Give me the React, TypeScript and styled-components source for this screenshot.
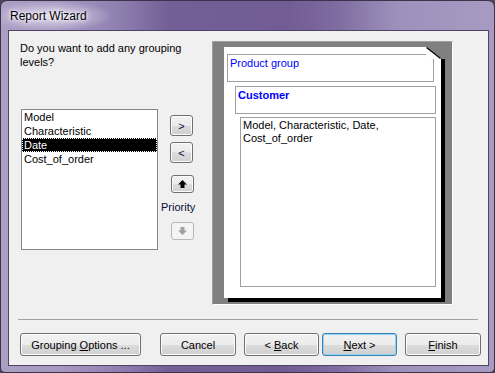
import styled, { createGlobalStyle } from "styled-components";

const GlobalStyle = createGlobalStyle`
  html, body {
    margin: 0;
    padding: 0;
  }
  body {
    width: 495px;
    height: 373px;
    overflow: hidden;
    background: #4b4658;
    font-family: "Liberation Sans", Arial, sans-serif;
    font-size: 11px;
  }
`;

const Window = styled.div`
  box-sizing: border-box;
  width: 495px;
  height: 373px;
  display: flex;
  flex-direction: column;
  padding: 0 5px 6px 7px;
  border: 1px solid #3b3349;
  border-radius: 7px 7px 5px 5px;
  background: linear-gradient(
    90deg,
    #ab9fc4 0%,
    #a698c0 12%,
    #8f7fb0 24%,
    #735f97 34%,
    #715c95 58%,
    #7e6ba0 68%,
    #9d90bb 80%,
    #a79bc3 100%
  );
`;

const TitleBar = styled.div`
  height: 29px;
  display: flex;
  align-items: center;
  margin-left: -7px;
  padding-left: 9px;
  font-size: 12px;
  color: #000;
  background: radial-gradient(
    ellipse 62px 15px at 50px 15px,
    rgba(235, 230, 245, 0.85) 0%,
    rgba(220, 212, 235, 0.5) 55%,
    rgba(220, 212, 235, 0) 100%
  );
  text-shadow: 0 0 6px #fff, 0 0 3px #fff;
`;

const Client = styled.div`
  flex: 1;
  display: flex;
  flex-direction: column;
  background: #f0f0f0;
  border: 1px solid #4e4563;
`;

const Main = styled.div`
  box-sizing: border-box;
  height: 288px;
  display: flex;
  align-items: flex-start;
  padding: 10px 0 0 11px;
`;

const LeftCol = styled.div`
  width: 192px;
`;

const Question = styled.p`
  margin: 0;
  width: 175px;
  line-height: 14px;
  color: #000;
`;

const Picker = styled.div`
  display: flex;
  align-items: flex-start;
  margin: 40px 0 0 1px;
`;

const ListBox = styled.div`
  box-sizing: border-box;
  width: 137px;
  height: 141px;
  background: #fff;
  border: 1px solid #828790;
`;

const ListRow = styled.div<{ $selected?: boolean }>`
  height: 14px;
  line-height: 14px;
  padding-left: 2px;
  color: ${(p) => (p.$selected ? "#fff" : "#000")};
  background: ${(p) => (p.$selected ? "#000" : "transparent")};
  outline: ${(p) => (p.$selected ? "1px dotted #fff" : "none")};
  outline-offset: -1px;
`;

const ButtonCol = styled.div`
  display: flex;
  flex-direction: column;
  align-items: flex-start;
  margin-left: 3px;
  padding-top: 6px;
`;

const SmallButton = styled.button<{ $h: number; $left: number; $top: number; $disabled?: boolean }>`
  box-sizing: border-box;
  width: 23px;
  height: ${(p) => p.$h}px;
  margin: ${(p) => p.$top}px 0 0 ${(p) => p.$left}px;
  padding: 0;
  display: flex;
  align-items: center;
  justify-content: center;
  font-family: inherit;
  font-size: 11px;
  color: #0a0a3a;
  border: 1px solid ${(p) => (p.$disabled ? "#b5b9bc" : "#707070")};
  border-radius: 3px;
  background: ${(p) =>
    p.$disabled
      ? "#f4f4f4"
      : "linear-gradient(#f2f2f2 0%, #ebebeb 50%, #dddddd 50%, #cfcfcf 100%)"};
  box-shadow: inset 0 0 0 1px ${(p) => (p.$disabled ? "#f4f4f4" : "#fcfcfc")};
`;

const PriorityLabel = styled.div`
  margin-top: 7px;
  line-height: 14px;
  color: #0a0a3a;
`;

const Preview = styled.div`
  box-sizing: border-box;
  width: 241px;
  height: 264px;
  padding: 5px 0 0 11px;
  background: #808080;
  border: 1px solid;
  border-color: #a0a0a0 #ffffff #ffffff #a0a0a0;
`;

const Page = styled.div`
  position: relative;
  box-sizing: border-box;
  width: 217px;
  height: 251px;
  padding-top: 7px;
  background: #fff;
  box-shadow: 4px 4px 0 #000;
`;

/* dog-ear over the page's top-right corner, also hiding the shadow beside it */
const Fold = styled.svg`
  position: absolute;
  top: 0;
  right: -5px;
`;

const Section = styled.div<{ $left: number; $top: number; $w: number; $h: number; $lh?: number }>`
  box-sizing: border-box;
  width: ${(p) => p.$w}px;
  height: ${(p) => p.$h}px;
  margin: ${(p) => p.$top}px 0 0 ${(p) => p.$left}px;
  padding: 1px 2px;
  border: 1px solid #a0a0a0;
  line-height: ${(p) => p.$lh ?? 14}px;
`;

const GroupText = styled.span<{ $bold?: boolean }>`
  color: #0000ff;
  font-weight: ${(p) => (p.$bold ? "bold" : "normal")};
`;

const Separator = styled.div`
  height: 0;
  border-top: 1px solid #a0a0a0;
  margin: 0 10px 0 9px;
`;

const Footer = styled.div`
  display: flex;
  padding: 13px 0 0 11px;
`;

const PushButton = styled.button<{ $w: number; $gap: number; $primary?: boolean }>`
  box-sizing: border-box;
  width: ${(p) => p.$w}px;
  height: 23px;
  margin-left: ${(p) => p.$gap}px;
  padding: 0;
  font-family: inherit;
  font-size: 11px;
  color: #000;
  border: 1px solid ${(p) => (p.$primary ? "#3c7fb1" : "#707070")};
  border-radius: 3px;
  background: linear-gradient(#f2f2f2 0%, #ebebeb 50%, #dddddd 50%, #cfcfcf 100%);
  box-shadow: inset 0 0 0 1px ${(p) => (p.$primary ? "#8fd3f5" : "#fcfcfc")};
`;

const fields = ["Model", "Characteristic", "Date", "Cost_of_order"];

function Arrow({ down, color }: { down?: boolean; color: string }) {
  return (
    <svg width="9" height="8" viewBox="0 0 9 8" style={{ transform: down ? "scaleY(-1)" : undefined }}>
      <polygon points="4.5,0 9,4.5 6.5,4.5 6.5,8 2.5,8 2.5,4.5 0,4.5" fill={color} />
    </svg>
  );
}

export default function App() {
  return (
    <>
      <GlobalStyle />
      <Window>
        <TitleBar>Report Wizard</TitleBar>
        <Client>
          <Main>
            <LeftCol>
              <Question>Do you want to add any grouping levels?</Question>
              <Picker>
                <ListBox>
                  {fields.map((f) => (
                    <ListRow key={f} $selected={f === "Date"}>
                      {f}
                    </ListRow>
                  ))}
                </ListBox>
                <ButtonCol>
                  <SmallButton $h={21} $left={9} $top={0}>&gt;</SmallButton>
                  <SmallButton $h={21} $left={9} $top={6}>&lt;</SmallButton>
                  <SmallButton $h={18} $left={10} $top={12}>
                    <Arrow color="#000" />
                  </SmallButton>
                  <PriorityLabel>Priority</PriorityLabel>
                  <SmallButton $h={18} $left={10} $top={8} $disabled>
                    <Arrow down color="#a0a0a0" />
                  </SmallButton>
                </ButtonCol>
              </Picker>
            </LeftCol>
            <Preview>
              <Page>
                <Fold width="20" height="12" viewBox="0 0 20 12">
                  <rect x="0" y="0" width="20" height="12" fill="#808080" />
                  <polygon points="0.5,0.5 14.5,11 14.5,12 0.5,12" fill="#fff" />
                  <polyline points="0.5,0 0.5,11.5 14.5,11.5" fill="none" stroke="#fff" strokeWidth="1" />
                  <line x1="0.5" y1="0.5" x2="14.5" y2="11.5" stroke="#000" strokeWidth="1.2" />
                </Fold>
                <Section $left={3} $top={0} $w={207} $h={28}>
                  <GroupText>Product group</GroupText>
                </Section>
                <Section $left={11} $top={4} $w={201} $h={28}>
                  <GroupText $bold>Customer</GroupText>
                </Section>
                <Section $left={16} $top={3} $w={196} $h={170} $lh={13}>
                  Model, Characteristic, Date,
                  <br />
                  Cost_of_order
                </Section>
              </Page>
            </Preview>
          </Main>
          <Separator />
          <Footer>
            <PushButton $w={121} $gap={0}>
              Grouping <u>O</u>ptions ...
            </PushButton>
            <PushButton $w={76} $gap={19}>Cancel</PushButton>
            <PushButton $w={75} $gap={8}>
              &lt; <u>B</u>ack
            </PushButton>
            <PushButton $w={75} $gap={3} $primary>
              <u>N</u>ext &gt;
            </PushButton>
            <PushButton $w={76} $gap={8}>
              <u>F</u>inish
            </PushButton>
          </Footer>
        </Client>
      </Window>
    </>
  );
}
